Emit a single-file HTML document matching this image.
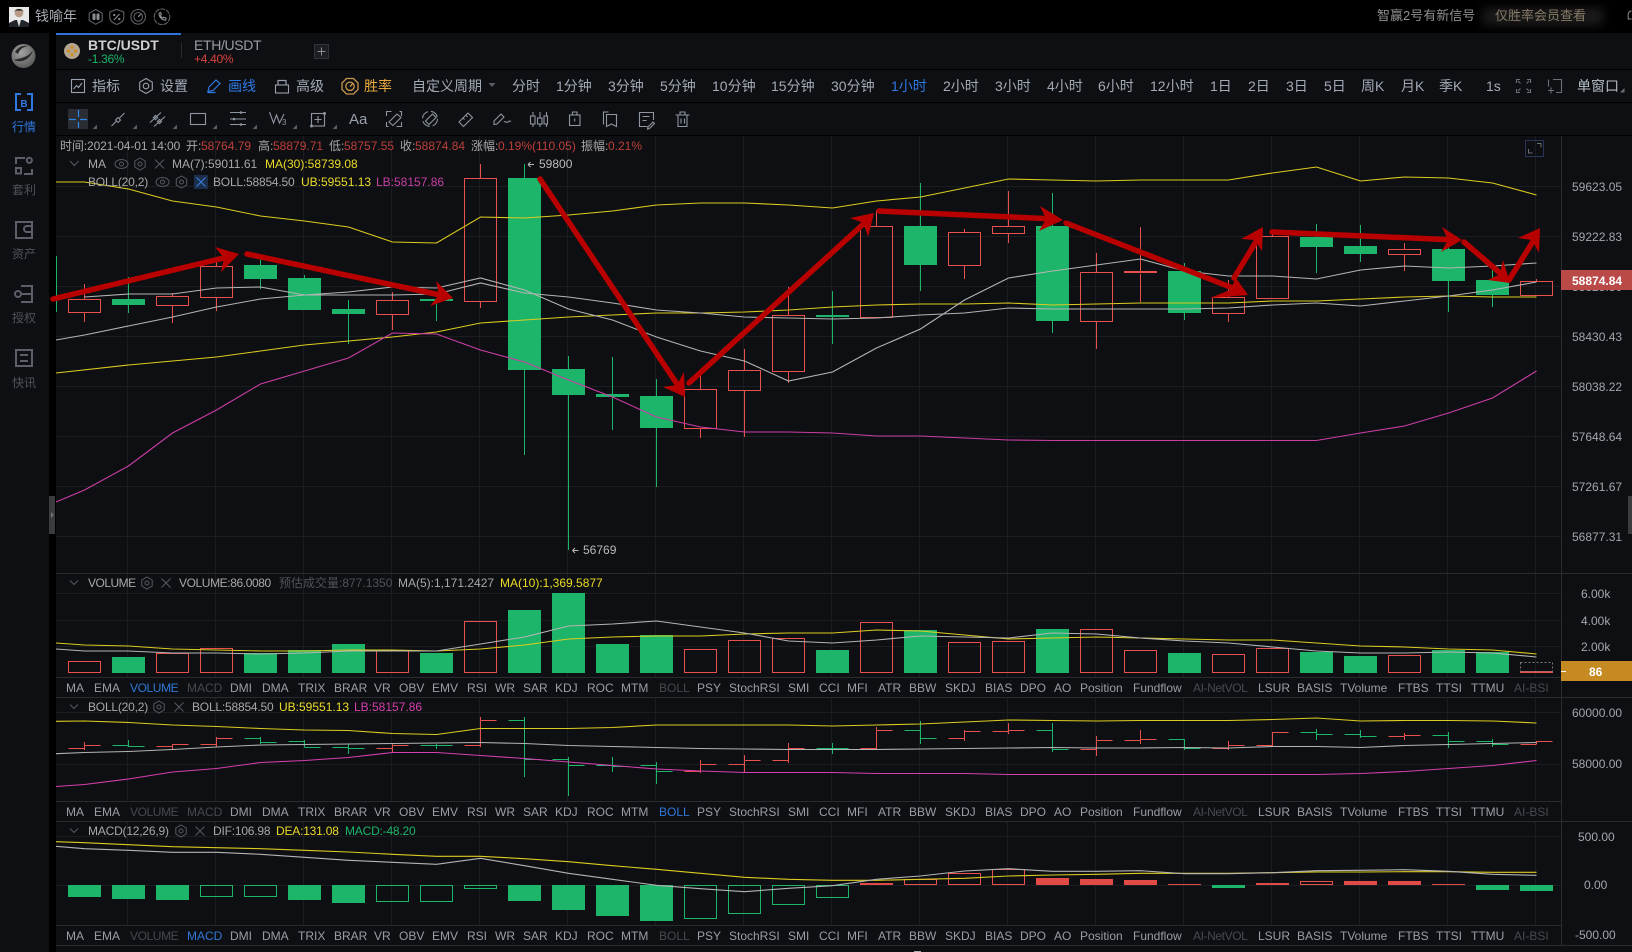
<!DOCTYPE html>
<html lang="zh"><head><meta charset="utf-8"><title>BTC/USDT</title>
<style>
html,body{margin:0;padding:0;background:#000}
#r{position:relative;width:1632px;height:952px;overflow:hidden;background:#000;font:12px/16px "Liberation Sans","Noto Sans CJK SC",sans-serif;color:#a8a8a8}
#r div.bg,#r svg.m{position:absolute}
.t,b{position:absolute;white-space:nowrap;font-weight:normal;height:16px;line-height:16px}
.n{font-size:14px;color:#a2aab6;top:78px}
.y{color:#ecdc28}.p{color:#c63fa6}.rd{color:#bd3f3b}
.ax{color:#a3a6ab;left:1572px}
.side{color:#4e525a;left:12px;width:24px;text-align:center}
.tb b{top:3px;color:#9a9ea5}
.tb b.d{color:#46494e}.tb b.a{color:#2f78d8}
.tb b.v{letter-spacing:-.4px}
.s2{letter-spacing:-.2px}
.tb{position:absolute;left:0;width:1561px;height:20px}
</style></head><body>
<div id="r">
<div class="bg" style="left:0;top:33px;width:49px;height:919px;background:#0d0f12"></div>
<div class="bg" style="left:56px;top:33px;width:1576px;height:919px;background:#0e0f12"></div>

<svg class="m" width="1632" height="952" viewBox="0 0 1632 952" style="left:0;top:0">
<defs>
<pattern id="v" x="127" y="0" width="88" height="10" patternUnits="userSpaceOnUse"><rect width="1" height="10" fill="#1b1d21"/></pattern>
<radialGradient id="lg" cx=".4" cy=".35" r=".8"><stop offset="0" stop-color="#a5a5a5"/><stop offset="1" stop-color="#4c4c4c"/></radialGradient>
<g id="hx" fill="none" stroke="#565a60"><path d="M0-6l5.2 3v6L0 6l-5.2-3v-6z"/><circle r="2"/></g>
<g id="xx" stroke="#565a60" fill="none"><path d="M-4.5-4.5l9 9M4.5-4.5l-9 9"/></g>
<g id="ey" fill="none" stroke="#565a60"><ellipse rx="6.5" ry="4.5"/><circle r="2"/></g>
<path id="tr" d="M4.5 0V4.5H0z" fill="#5a5d63"/>
</defs>

<!-- row separators -->
<rect x="56" y="69" width="1576" height="1" fill="#000"/><rect x="56" y="102" width="1576" height="1" fill="#000"/><rect x="56" y="135" width="1576" height="1" fill="#000"/>
<!-- grid -->
<rect x="127" y="136" width="1409" height="541" fill="url(#v)"/><rect x="127" y="697" width="1409" height="104" fill="url(#v)"/><rect x="127" y="821" width="1409" height="104" fill="url(#v)"/>
<path stroke="#1b1d21" d="M56 186.5H1561M56 236.5H1561M56 286.5H1561M56 336.5H1561M56 386.5H1561M56 436.5H1561M56 486.5H1561M56 536.5H1561M56 593.5H1561M56 620.5H1561M56 646.5H1561M56 712.5H1561M56 764.5H1561M56 836.5H1561M56 885.5H1561"/>
<path stroke="#2a2c30" d="M56 573.5H1632M56 677.5H1561M56 697.5H1632M56 801.5H1561M56 821.5H1632M56 925.5H1561M56 945.5H1632M1561.5 136V945"/>

<!-- main candles -->
<g shape-rendering="crispEdges">
<path fill="none" stroke="#1db56a" d="M56.5 256V312M128.5 277V313M260.5 258V289M304.5 275V310M348.5 300V344M436.5 298V321M524.5 164V455M568.5 356V550M612.5 357V430M656.5 379V487M832.5 291V344M920.5 183V291M1052.5 193V333M1184.5 263V320M1316.5 224V273M1360.5 225V262M1448.5 235V312M1492.5 270V307"/>
<path fill="#1db56a" d="M112 299h33v6h-33zM244 265h33v14h-33zM288 278h33v32h-33zM332 309h33v5h-33zM420 299h33v2h-33zM508 178h33v192h-33zM552 369h33v26h-33zM596 394h33v3h-33zM640 396h33v32h-33zM816 315h33v2h-33zM904 226h33v39h-33zM1036 226h33v95h-33zM1168 271h33v42h-33zM1300 237h33v10h-33zM1344 246h33v8h-33zM1432 249h33v32h-33zM1476 280h33v15h-33z"/>
<path fill="none" stroke="#e8504b" d="M68.5 299.5h32v13h-32zM84.5 284v15M84.5 313v9M156.5 296.5h32v9h-32zM172.5 293v3M172.5 306v17M200.5 266.5h32v31h-32zM216.5 262v4M216.5 298v13M376.5 300.5h32v14h-32zM392.5 292v8M392.5 315v15M464.5 178.5h32v123h-32zM480.5 164v14M480.5 302v6M684.5 389.5h32v39h-32zM700.5 375v14M700.5 429v9M728.5 370.5h32v20h-32zM744.5 349v21M744.5 391v46M772.5 315.5h32v56h-32zM788.5 287v28M788.5 372v11M860.5 226.5h32v91h-32zM876.5 210v16M948.5 232.5h32v33h-32zM964.5 229v3M964.5 266v13M992.5 226.5h32v7h-32zM1008.5 191v35M1008.5 234v9M1080.5 272.5h32v49h-32zM1096.5 253v19M1096.5 322v27M1124.5 271.5h32v1h-32zM1140.5 227v44M1140.5 274v28M1212.5 297.5h32v16h-32zM1228.5 280v17M1228.5 314v8M1256.5 236.5h32v62h-32zM1272.5 233v3M1388.5 249.5h32v5h-32zM1404.5 243v6M1404.5 255v16M1520.5 281.5h32v14h-32zM1536.5 279v2"/>
</g>
<!-- main lines -->
<g fill="none" stroke-width="1.1">
<polyline stroke="#dccc20" points="56,182 84.5,182 128.5,189 172.5,201 216.5,207 260.5,216 304.5,221 348.5,227 392.5,242 436.5,243 480.5,217 524.5,218 568.5,215 612.5,211 656.5,205 700.5,203 744.5,203 788.5,205 832.5,208 876.5,201 920.5,197 964.5,188 1008.5,179 1052.5,180 1096.5,181 1140.5,180 1184.5,180 1228.5,180 1272.5,173 1316.5,167 1360.5,181 1404.5,177 1448.5,178 1492.5,183 1536.5,195"/>
<polyline stroke="#dccc20" points="56,373 128.5,365 172.5,361 216.5,357 260.5,351 304.5,345 348.5,341 392.5,337 436.5,332 480.5,323 524.5,320 568.5,317 612.5,315 656.5,313 700.5,313 744.5,312 788.5,310 832.5,307 876.5,305 920.5,304 964.5,304 1008.5,303 1052.5,305 1096.5,304 1140.5,303 1184.5,303 1228.5,303 1272.5,301 1316.5,301 1360.5,299 1404.5,297 1448.5,296 1492.5,297 1536.5,297"/>
<polyline stroke="#b4b4b4" points="56,340 84.5,335 128.5,326 172.5,317 216.5,307 260.5,299 304.5,295 348.5,295 392.5,295 436.5,294 480.5,283 524.5,293 568.5,297 612.5,303 656.5,310 700.5,313 744.5,317 788.5,318 832.5,319 876.5,318 920.5,315 964.5,313 1008.5,308 1052.5,309 1096.5,309 1140.5,309 1184.5,309 1228.5,308 1272.5,305 1316.5,303 1360.5,306 1404.5,301 1448.5,296 1492.5,290 1536.5,282"/>
<polyline stroke="#b4b4b4" points="84.5,297 128.5,294 172.5,294 216.5,288 260.5,287 304.5,295 348.5,292 392.5,287 436.5,288 480.5,278 524.5,290 568.5,309 612.5,320 656.5,337 700.5,351 744.5,361 788.5,381 832.5,372 876.5,348 920.5,329 964.5,300 1008.5,278 1052.5,271 1096.5,265 1140.5,259 1184.5,271 1228.5,276 1272.5,276 1316.5,279 1360.5,270 1404.5,266 1448.5,268 1492.5,266 1536.5,263"/>
<polyline stroke="#c93ea6" points="56,502 84.5,490 128.5,466 172.5,433 216.5,410 260.5,384 304.5,371 348.5,358 392.5,333 436.5,334 480.5,350 524.5,362 568.5,380 612.5,397 656.5,417 700.5,427 744.5,432 788.5,432 832.5,433 876.5,436 920.5,436 964.5,438 1008.5,440 1052.5,440.5 1316.5,440.5 1360.5,433 1404.5,426 1448.5,413 1492.5,398 1536.5,371"/>
</g>
<!-- red arrows -->
<g stroke="#b90000" stroke-width="5.5" stroke-linecap="round" fill="none">
<path d="M53 299L232 256M247 254L445 296M540 179L681 390M689 383L870 218M879 211L1055 219M1066 223L1243 292M1234 278L1260 235M1272 232L1456 240M1464 242L1507 279M1509 280L1537 235"/>
</g>
<g fill="#b90000">
<polygon points="239,254 215,247 224,258 221,272"/><polygon points="453,298 436,281 439,295 430,306"/><polygon points="685,397 684,372 677,385 663,387"/><polygon points="874,213 850,218 863.5,223 868,237"/><polygon points="1063,220 1040,206 1046,219 1039,231"/><polygon points="1248,295 1236,278 1230,290 1210,298"/><polygon points="1263,227 1241,239 1255,240 1262,251"/><polygon points="1462,240 1442,227 1448,240 1441,252"/><polygon points="1510,283 1503,260 1500,274 1488,280"/><polygon points="1540,228 1518,238 1532,240 1539,253"/>
</g>
<!-- extreme label arrows -->
<path stroke="#b8b8b8" fill="none" d="M528 164.5h6M528 164.5l2.500-2.500M528 164.500l2.500 2.500M572.500 550.500h6M572.500 550.500l2.500-2.500M572.500 550.500l2.500 2.500"/>

<!-- volume -->
<g shape-rendering="crispEdges">
<path fill="#1db56a" d="M112 657h33V673h-33zM244 653h33V673h-33zM288 650h33V673h-33zM332 644h33V673h-33zM420 653h33V673h-33zM508 610h33V673h-33zM552 593h33V673h-33zM596 644h33V673h-33zM640 635h33V673h-33zM816 650h33V673h-33zM904 630h33V673h-33zM1036 629h33V673h-33zM1168 653h33V673h-33zM1300 652h33V673h-33zM1344 656h33V673h-33zM1432 650h33V673h-33zM1476 652h33V673h-33z"/>
<path fill="none" stroke="#e8504b" d="M68.500 661.500h32V672.500h-32zM156.500 653.500h32V672.500h-32zM200.500 648.500h32V672.500h-32zM376.500 650.500h32V672.500h-32zM464.500 621.500h32V672.500h-32zM684.500 649.500h32V672.500h-32zM728.500 640.500h32V672.500h-32zM772.500 638.500h32V672.500h-32zM860.500 622.500h32V672.500h-32zM948.500 642.500h32V672.500h-32zM992.500 641.500h32V672.500h-32zM1080.500 629.500h32V672.500h-32zM1124.500 650.500h32V672.500h-32zM1212.500 654.500h32V672.500h-32zM1256.500 648.500h32V672.500h-32zM1388.500 655.500h32V672.500h-32z"/>
<rect x="1520" y="671" width="33" height="2" fill="#e8504b"/>
<rect x="1520.500" y="662.500" width="32" height="9" fill="none" stroke="#777" stroke-dasharray="2 2"/>
</g>
<g fill="none" stroke-width="1.1">
<polyline stroke="#dccc20" points="56,643 84.5,645 128.5,646 172.5,649 216.5,650 260.5,651 304.5,651 348.5,650 392.5,650 436.5,651 480.5,649 524.5,645 568.5,639 612.5,637 656.5,636 700.5,636 744.5,634 788.5,633 832.5,633 876.5,630 920.5,631 964.5,635 1008.5,639 1052.5,638 1096.5,637 1140.5,638 1184.5,639 1228.5,640 1272.5,640 1316.5,643 1360.5,646 1404.5,647 1448.5,649 1492.5,650 1536.5,654"/>
<polyline stroke="#b4b4b4" points="56,649 84.5,651 128.5,651 172.5,653 216.5,653 260.5,654 304.5,653 348.5,651 392.5,651 436.5,651 480.5,644 524.5,637 568.5,626 612.5,624 656.5,621 700.5,627 744.5,633 788.5,641 832.5,643 876.5,640 920.5,636 964.5,637 1008.5,638 1052.5,633 1096.5,634 1140.5,638 1184.5,641 1228.5,643 1272.5,647 1316.5,651 1360.5,653 1404.5,653 1448.5,652 1492.5,653 1536.5,657"/>
</g>

<!-- BOLL sub panel -->
<g shape-rendering="crispEdges" fill="none">
<path stroke="#e8504b" d="M68.5 748.5h16M84.5 745.5h16M84.5 742V750M156.5 746.5h16M172.5 744.5h16M172.5 744V749M200.5 744.5h16M216.5 738.5h16M216.5 737V747M376.5 748.5h16M392.5 745.5h16M392.5 743V752M464.5 745.5h16M480.5 720.5h16M480.5 717V747M684.5 771.5h16M700.5 764.5h16M700.5 760V773M728.5 764.5h16M744.5 760.5h16M744.5 755V772M772.5 760.5h16M788.5 748.5h16M788.5 743V763M860.5 748.5h16M876.5 730.5h16M876.5 727V749M948.5 738.5h16M964.5 731.5h16M964.5 730V741M992.5 731.5h16M1008.5 730.5h16M1008.5 723V734M1080.5 749.5h16M1096.5 740.5h16M1096.5 736V756M1124.5 740.5h16M1140.5 739.5h16M1140.5 730V744M1212.5 748.5h16M1228.5 745.5h16M1228.5 741V750M1256.5 745.5h16M1272.5 732.5h16M1272.5 732V746M1388.5 736.5h16M1404.5 735.5h16M1404.5 733V740M1520.5 744.5h16M1536.5 741.5h16M1536.5 741V744"/>
<path stroke="#1db56a" d="M112.5 745.5h16M128.5 746.5h16M128.5 740V747M244.5 738.5h16M260.5 742.5h16M260.5 737V744M288.5 741.5h16M304.5 747.5h16M304.5 740V747M332.5 747.5h16M348.5 748.5h16M348.5 744V754M420.5 745.5h16M436.5 745.5h16M436.5 744V749M508.5 720.5h16M524.5 759.5h16M524.5 717V777M552.5 759.5h16M568.5 765.5h16M568.5 757V796M596.5 765.5h16M612.5 766.5h16M612.5 757V772M640.5 765.5h16M656.5 771.5h16M656.5 762V784M816.5 748.5h16M832.5 748.5h16M832.5 743V754M904.5 730.5h16M920.5 738.5h16M920.5 721V744M1036.5 730.5h16M1052.5 749.5h16M1052.5 723V752M1168.5 739.5h16M1184.5 748.5h16M1184.5 739V750M1300.5 732.5h16M1316.5 734.5h16M1316.5 729V740M1344.5 734.5h16M1360.5 736.5h16M1360.5 730V738M1432.5 735.5h16M1448.5 741.5h16M1448.5 732V748M1476.5 741.5h16M1492.5 744.5h16M1492.5 739V747"/>
</g>
<g fill="none" stroke-width="1.1">
<polyline stroke="#dccc20" points="56,721.3 84.5,721 128.5,722.5 172.5,725 216.5,726.5 260.5,728.5 304.5,730 348.5,730.5 392.5,733.5 436.5,734.5 480.5,728.5 524.5,728.5 568.5,728.5 612.5,727.5 656.5,725 700.5,725 744.5,725 788.5,725 832.5,726 876.5,725 920.5,724 964.5,722 1008.5,720 1052.5,720.5 1096.5,721 1140.5,720.5 1184.5,720.5 1228.5,720.5 1272.5,719.5 1316.5,718 1360.5,721 1404.5,720.5 1448.5,720.5 1492.5,721 1536.5,723"/>
<polyline stroke="#b4b4b4" points="56,753.7 84.5,752.5 128.5,751.5 172.5,749.5 216.5,747 260.5,745 304.5,744.5 348.5,744 392.5,743.5 436.5,743 480.5,742.5 524.5,743.5 568.5,745.5 612.5,746.5 656.5,747.5 700.5,748.5 744.5,749 788.5,749.5 832.5,749.5 876.5,749.5 920.5,749 964.5,748.5 1008.5,748 1052.5,747.5 1096.5,748 1140.5,748 1184.5,747.5 1228.5,748 1272.5,746.5 1316.5,746.5 1360.5,747.5 1404.5,745.5 1448.5,744.5 1492.5,743.5 1536.5,742.5"/>
<polyline stroke="#d63fb0" points="56,786.5 84.5,784.5 128.5,779 172.5,772 216.5,768.5 260.5,762.5 304.5,760.5 348.5,757.5 392.5,752.5 436.5,752.5 480.5,755.5 524.5,758.5 568.5,762 612.5,765.5 656.5,769 700.5,771 744.5,772.5 788.5,772.5 832.5,772.5 876.5,773.5 920.5,773.5 964.5,773.5 1008.5,774.5 1316.5,774.5 1360.5,773.5 1404.5,771.5 1448.5,768.5 1492.5,765.5 1536.5,760.5"/>
</g>

<!-- MACD -->
<g shape-rendering="crispEdges">
<path fill="#1db56a" d="M68 885h33V897h-33zM112 885h33V899h-33zM156 885h33V900h-33zM288 885h33V900h-33zM332 885h33V903h-33zM508 885h33V901h-33zM552 885h33V910h-33zM596 885h33V916h-33zM640 885h33V921h-33zM1212 885h33V888h-33zM1476 885h33V890h-33zM1520 885h33V891h-33z"/>
<path fill="none" stroke="#1db56a" d="M200.500 885.500h32V896.500h-32zM244.500 885.500h32V896.500h-32zM376.500 885.500h32V901.500h-32zM420.500 885.500h32V901.500h-32zM464.500 885.500h32V888.500h-32zM684.500 885.500h32V918.500h-32zM728.500 885.500h32V913.500h-32zM772.500 885.500h32V904.500h-32zM816.500 885.500h32V897.500h-32z"/>
<path fill="#e24a45" d="M860 883h33V885h-33zM1036 878h33V885h-33zM1080 879h33V885h-33zM1124 880h33V885h-33zM1168 884h33V885h-33zM1256 883h33V885h-33zM1344 881h33V885h-33zM1388 881h33V885h-33zM1432 884h33V885h-33z"/>
<path fill="none" stroke="#e8504b" d="M904.500 879.500h32V884.500h-32zM948.500 873.500h32V884.500h-32zM992.500 869.500h32V884.500h-32zM1300.500 881.500h32V884.500h-32z"/>
</g>
<g fill="none" stroke-width="1.1">
<polyline stroke="#dccc20" points="56,841.7 84.5,842.7 128.5,844.7 172.5,846.7 216.5,847.7 260.5,848.7 304.5,850.3 348.5,852 392.5,854.3 436.5,856.3 480.5,856.3 524.5,858.7 568.5,861.7 612.5,865.7 656.5,869.3 700.5,873.3 744.5,877.3 788.5,879.3 832.5,880.3 876.5,880.3 920.5,879.3 964.5,878.3 1008.5,876 1052.5,875 1096.5,874.3 1140.5,873.3 1184.5,873.3 1228.5,873.3 1272.5,872.7 1316.5,872 1360.5,872 1404.5,871.7 1448.5,871.7 1492.5,872.3 1536.5,872.3"/>
<polyline stroke="#b4b4b4" points="56,846.3 84.5,848.7 128.5,850.3 172.5,852.3 216.5,852.3 260.5,854.3 304.5,857.3 348.5,860.3 392.5,862.3 436.5,864.3 480.5,858.3 524.5,865.7 568.5,873.3 612.5,879.3 656.5,885.3 700.5,888.7 744.5,891.7 788.5,888.3 832.5,885.7 876.5,879.3 920.5,876 964.5,871 1008.5,868.7 1052.5,871.3 1096.5,871.3 1140.5,870.7 1184.5,873.7 1228.5,873.7 1272.5,872.7 1316.5,870.7 1360.5,870.3 1404.5,869.700 1448.5,871.3 1492.5,874.3 1536.5,875.3"/>
</g>

<!-- price boxes -->
<rect x="1561" y="270" width="71" height="20" fill="#b94a47"/>
<rect x="1561" y="280" width="5" height="1" fill="#fff"/>
<rect x="1561" y="661" width="71" height="20" fill="#c68a22"/>
<rect x="1561" y="671" width="5" height="1" fill="#fff"/>
<rect x="914" y="951" width="7" height="1" fill="#aaa"/>

<!-- collapse handles -->
<rect x="49" y="496" width="6" height="38" fill="#3a3c40"/><path d="M51 512l2.500 3-2.500 3z" fill="#777"/>
<rect x="1628" y="496" width="4" height="38" fill="#3a3c40"/>

<!-- top bar icons -->
<rect x="9" y="7" width="20" height="20" fill="#e8e8e8"/>
<path d="M9 27v-4l6-3h8l6 3v4z" fill="#22262c"/><path d="M17 20l2 7 2-7z" fill="#ddd"/><circle cx="19" cy="13" r="4.300" fill="#b89a86"/><path d="M14.500 12c0-4 9-4 9 0l-1-1.500h-7z" fill="#1a1a1a"/>
<g fill="none" stroke="#5e6166" stroke-width="1.100">
<path d="M95.700 9.500l6.500 3.700v7.400l-6.500 3.700-6.500-3.700v-7.400z"/>
<path d="M116.800 9.500l7 2.500v6c0 3-3 5-7 6.500-4-1.500-7-3.500-7-6.500v-6z"/>
<circle cx="138.200" cy="16.800" r="7.300"/><circle cx="138.200" cy="16.800" r="4.300"/>
<circle cx="162" cy="16.800" r="7.800" stroke-dasharray="5 .8"/>
<path d="M159 13.500c0 3.500 3 6.700 6.700 6.700l.4-2-2.100-1-1 .9c-1-.4-2.100-1.500-2.600-2.700l1-1-.9-2z" stroke="#8a8d92"/>
<path d="M119.500 14l-5.500 6" stroke="#8a8d92"/><path d="M138.200 16.800l2.500-2.500" stroke="#8a8d92"/>
</g>
<rect x="92.500" y="13.500" width="3" height="6.500" rx="1" fill="#8a8d92"/><rect x="96.500" y="13.500" width="3" height="6.500" rx="1" fill="#8a8d92"/>
<circle cx="114.300" cy="15" r="1.100" fill="#8a8d92"/><circle cx="119.300" cy="19" r="1.100" fill="#8a8d92"/>
<path d="M1631.500 11c-2.500 0-3.300 2-3.300 4v4h3.300" fill="none" stroke="#777" stroke-width="1.200"/>

<!-- tab strip -->
<rect x="56" y="33" width="125" height="2" fill="#2d73d9"/>
<rect x="181" y="43" width="1" height="15" fill="#2a2c30"/>
<circle cx="72" cy="51" r="8" fill="#b3a58f"/>
<g fill="#d48a1f"><path d="M72 45.500l2 2-2 2-2-2z"/><path d="M72 52.500l2 2-2 2-2-2z"/><path d="M68.500 49l2 2-2 2-2-2z"/><path d="M75.500 49l2 2-2 2-2-2z"/></g>
<rect x="314.500" y="44.500" width="14" height="14" fill="#1c1e22" stroke="#303338"/>
<path d="M317.500 51.500h8M321.500 47.500v8" stroke="#8a8d92"/>

<!-- side icons -->
<circle cx="23.500" cy="56" r="12" fill="url(#lg)"/>
<path d="M14 60c6-2 14-2 19-10-2 8-10 14-19 10zM15 52c3-5 8-7 13-6-5 1-8 3-10 8z" fill="#2a2a2a"/>
<g fill="none" stroke="#2f78e0" stroke-width="2">
<path d="M21 94H16V110H21M27 94H32V110H27"/>
</g>
<g fill="none" stroke="#5b5f6a" stroke-width="2">
<path d="M25 158H16V164M32 169V174H24"/><circle cx="29.300" cy="160.300" r="2.600"/><rect x="16" y="168" width="5" height="5.500"/>
<rect x="16" y="222" width="16" height="16"/><path d="M32 226H27a3 3 0 0 0 0 6h5"/>
<path d="M21 286H32V302H21M22 294H32" /><circle cx="18" cy="294" r="3"/>
<rect x="16" y="350" width="16" height="16"/><path d="M20 355H28M20 361H28"/>
</g>

<!-- toolbar 1 icons -->
<g fill="none" stroke="#98a1ad" stroke-width="1.100">
<rect x="71.500" y="79.500" width="13" height="13"/><path d="M73.500 89l3-3.500 2 2 3.500-4.500"/>
<path d="M146 78.500l6.300 3.700v7.600L146 93.500l-6.300-3.700v-7.600z"/><circle cx="146" cy="86" r="2.800"/>
<rect x="275.500" y="85" width="13" height="8"/><path d="M278 85v-4.500h8V85" stroke-width="1.200"/>
<path d="M1516.500 83v-3.500h3.500M1527 79.500h3.500V83M1516.500 89v3.500h3.500M1527 92.500h3.500V89M1518 81l2.500 2.500M1529 81l-2.500 2.500M1518 91l2.500-2.500M1529 91l-2.500-2.500" stroke="#6a7078"/>
<path d="M1553 79.500h8.500v13H1556M1548.500 79.500v7" stroke="#6a7078"/><path d="M1548 90.500h6M1551 87.500v6" stroke="#6a7078"/>
</g>
<path d="M207.500 92.500h8M209 87l7-7 4 3.500-7 7-5 1z" fill="none" stroke="#2f78e0" stroke-width="1.200"/>
<g fill="none" stroke="#c7994a" stroke-width="1.300">
<path d="M346.500 78.500h7l4.500 4.500v6.500L353.500 94h-7L342 89.500V83z"/><circle cx="350" cy="86.300" r="4.200"/><path d="M350 86.500l2.800-3"/>
</g>
<path d="M488.500 83h7l-3.500 4z" fill="#5a5d63"/>
<path d="M1620 92.500h4.500V88z" fill="#6a6d72"/>

<!-- toolbar 2 icons -->
<rect x="68" y="109" width="20" height="20" fill="#2a2d33"/>
<path d="M69 119.500h7M80 119.500h7M78.500 110v7M78.500 122v6" stroke="#2f86e8" stroke-width="1.200"/>
<g fill="none" stroke="#8d95a0" stroke-width="1.100">
<path d="M111.500 126l5-5M119.500 118l5-5"/><path d="M118 117.500l2.500 2.500-2.500 2.500-2.500-2.500z"/>
<path d="M150 122.500l11-10M154 126.500l11-10"/><rect x="154" y="116" width="3" height="3" transform="rotate(45 155.500 117.500)"/><rect x="158" y="120" width="3" height="3" transform="rotate(45 159.500 121.500)"/>
<rect x="190.500" y="113.500" width="15" height="11"/>
<path d="M230 112.500h16M230 119h16M230 124.500h16"/>
<path d="M269.500 112l4 11 3-8 3 8 4.500-9"/>
<rect x="311.500" y="113.500" width="13" height="12.500"/><path d="M314.500 119.500h7M318 116v7"/>
<path d="M386.500 116v-4.500h5M396.500 126.500h5V122M386.500 122v4.500h2M401.500 116v-4.500h-2"/><path d="M389 122l8-8 4 3.500-8 8z"/>
<circle cx="430" cy="118.800" r="7.500" stroke-dasharray="9 3"/><path d="M425.500 121l7-7 3.500 3.500-7 7z"/>
<path d="M459 122l9-9 4.500 4.500-9 9z"/><path d="M463 118l1.500 1.500M466 115.500l1.500 1.500"/>
<path d="M494 121l7-7 3 3-7 7-3 .5zM504 122c1.500-1.500 2.500 1.500 4 0s2-1 3-.5"/>
<path d="M533 112v15M540 112v15M546.500 112v15"/><rect x="530.500" y="116" width="4.500" height="8" fill="#0e0f12"/><rect x="537.500" y="118" width="4.500" height="6" fill="#0e0f12"/><rect x="544" y="116" width="3.500" height="8" fill="#0e0f12"/>
<rect x="569.500" y="115" width="10.500" height="10.500"/><path d="M572.500 115v-3h4.500v3M574.700 118.500v3"/>
<path d="M603.500 124.500V112h5M606.500 114.500h10v12l-5-2.500-5 2.500z"/>
<path d="M653.500 120v-7.500h-14v14h8M642.500 116.500h7M642.500 120.500h4M648 127l5-5 1.500 1.500-5 5-2 .5z"/>
<path d="M675.500 115h14M678 115v11.500h9V115M680 115v-3h5v3M681 118.500v5M684.500 118.500v5"/>
</g>
<circle cx="241" cy="112.500" r="1.300" fill="#8d95a0"/><circle cx="234" cy="119" r="1.300" fill="#8d95a0"/><circle cx="241" cy="124.500" r="1.300" fill="#8d95a0"/>
<use href="#tr" x="92.500" y="124.500"/><use href="#tr" x="132.500" y="124.500"/><use href="#tr" x="172.500" y="124.500"/><use href="#tr" x="212.500" y="124.500"/><use href="#tr" x="252.500" y="124.500"/><use href="#tr" x="292.500" y="124.500"/><use href="#tr" x="332.500" y="124.500"/>
<circle cx="311.500" cy="126" r="1.500" fill="#8d95a0"/><circle cx="324.500" cy="113.500" r="1.500" fill="#8d95a0"/>

<!-- legend icons -->
<path d="M70 161l4.300 4.500 4.300-4.500M70 580.500l4 4 4-4M70 704.500l4 4 4-4M70 828.500l4 4 4-4" fill="none" stroke="#56595e"/>
<use href="#ey" x="121.500" y="164"/><use href="#hx" x="140" y="164"/><use href="#xx" x="159.500" y="164"/>
<use href="#ey" x="162.500" y="182"/><use href="#hx" x="181.500" y="182"/>
<rect x="194" y="175" width="14" height="14" fill="#1c2e4c"/><path d="M196.500 177.500l9 9M205.500 177.500l-9 9" stroke="#3a82e0"/>
<use href="#hx" x="147" y="583"/><use href="#xx" x="166" y="583"/>
<use href="#hx" x="159" y="707"/><use href="#xx" x="179" y="707"/>
<use href="#hx" x="181" y="831"/><use href="#xx" x="200" y="831"/>
<rect x="1525.500" y="140.500" width="18" height="16" fill="none" stroke="#2a3358"/>
<path d="M1537 143.500h4v4M1528.500 149v4h4" fill="none" stroke="#6a6e76"/>
</svg>

<!-- TOP BAR TEXT -->
<div class="bg" style="left:1483px;top:8px;width:120px;height:17px;background:#1c1b1a;filter:blur(5px)"></div>
<span class="t" style="left:35px;top:8px;font-size:14px;color:#a6abb3">钱喻年</span>
<span class="t" style="left:1377px;top:8px;font-size:13px;color:#8f8f8f">智赢2号有新信号</span>
<span class="t" style="left:1495px;top:8px;font-size:13px;color:#857a68">仅胜率会员查看</span>

<!-- TABS -->
<span class="t" style="left:88px;top:37px;font-size:14px;font-weight:bold;color:#cfcfcf">BTC/USDT</span>
<span class="t" style="left:88px;top:51px;font-size:12px;letter-spacing:-.3px;color:#1db56a">-1.36%</span>
<span class="t" style="left:194px;top:37px;font-size:14px;letter-spacing:-.35px;color:#989da3">ETH/USDT</span>
<span class="t" style="left:194px;top:51px;font-size:12px;letter-spacing:-.3px;color:#d9423e">+4.40%</span>

<!-- SIDEBAR TEXT -->
<span class="t" style="left:12px;top:119px;width:24px;text-align:center;color:#2f78e0">行情</span>
<span class="t side" style="top:182px">套利</span>
<span class="t side" style="top:246px">资产</span>
<span class="t side" style="top:310px">授权</span>
<span class="t side" style="top:375px">快讯</span>
<span class="t" style="left:18px;top:97px;width:12px;text-align:center;font-size:10px;font-weight:bold;color:#2f78e0">B</span>

<!-- TOOLBAR 1 -->
<span class="t n" style="left:92px">指标</span><span class="t n" style="left:160px">设置</span>
<span class="t n" style="left:228px;color:#2f7be6">画线</span><span class="t n" style="left:296px">高级</span>
<span class="t n" style="left:364px;color:#e8a83a">胜率</span><span class="t n" style="left:412px">自定义周期</span>
<span class="t n" style="left:512px">分时</span><span class="t n" style="left:556px">1分钟</span><span class="t n" style="left:608px">3分钟</span><span class="t n" style="left:660px">5分钟</span><span class="t n" style="left:712px">10分钟</span><span class="t n" style="left:771px">15分钟</span><span class="t n" style="left:831px">30分钟</span>
<span class="t n" style="left:891px;color:#2f78e0">1小时</span><span class="t n" style="left:943px">2小时</span><span class="t n" style="left:995px">3小时</span><span class="t n" style="left:1047px">4小时</span><span class="t n" style="left:1098px">6小时</span><span class="t n" style="left:1150px">12小时</span>
<span class="t n" style="left:1210px">1日</span><span class="t n" style="left:1248px">2日</span><span class="t n" style="left:1286px">3日</span><span class="t n" style="left:1324px">5日</span><span class="t n" style="left:1361px">周K</span><span class="t n" style="left:1401px">月K</span><span class="t n" style="left:1439px">季K</span><span class="t n" style="left:1486px">1s</span>
<span class="t n" style="left:1577px;color:#b4bcc6">单窗口</span>
<span class="t" style="left:349px;top:112px;font-size:15px;color:#98a1ad">Aa</span>
<span class="t" style="left:282px;top:115px;font-size:8px;color:#8d95a0">3</span>

<!-- CHART LEGEND -->
<span class="t" style="left:60px;top:138px;letter-spacing:-.1px">时间:2021-04-01 14:00</span>
<span class="t" style="left:186px;top:138px">开:</span><span class="t rd" style="left:201px;top:138px">58764.79</span>
<span class="t" style="left:258px;top:138px">高:</span><span class="t rd" style="left:273px;top:138px">58879.71</span>
<span class="t" style="left:329px;top:138px">低:</span><span class="t rd" style="left:344px;top:138px">58757.55</span>
<span class="t" style="left:400px;top:138px">收:</span><span class="t rd" style="left:415px;top:138px">58874.84</span>
<span class="t" style="left:471px;top:138px">涨幅:</span><span class="t rd" style="left:498px;top:138px">0.19%(110.05)</span>
<span class="t" style="left:581px;top:138px">振幅:</span><span class="t rd" style="left:608px;top:138px">0.21%</span>
<span class="t" style="left:88px;top:156px">MA</span><span class="t" style="left:172px;top:156px">MA(7):59011.61</span><span class="t y" style="left:265px;top:156px">MA(30):58739.08</span>
<span class="t s2" style="left:88px;top:174px">BOLL(20,2)</span><span class="t s2" style="left:213px;top:174px">BOLL:58854.50</span><span class="t y" style="left:301px;top:174px">UB:59551.13</span><span class="t p" style="left:376px;top:174px">LB:58157.86</span>
<span class="t" style="left:539px;top:156px;color:#bbb">59800</span>
<span class="t" style="left:583px;top:542px;color:#bbb">56769</span>

<!-- AXES -->
<span class="t ax" style="top:179px">59623.05</span><span class="t ax" style="top:229px">59222.83</span><span class="t ax" style="top:279px">58825.30</span><span class="t ax" style="top:329px">58430.43</span><span class="t ax" style="top:379px">58038.22</span><span class="t ax" style="top:429px">57648.64</span><span class="t ax" style="top:479px">57261.67</span><span class="t ax" style="top:529px">56877.31</span>
<div class="bg" style="left:1561px;top:270px;width:71px;height:20px;background:#b94a47"></div>
<span class="t" style="left:1572px;top:273px;color:#fff;font-weight:bold;font-size:12px">58874.84</span>
<span class="t ax" style="left:1581px;top:586px">6.00k</span><span class="t ax" style="left:1581px;top:613px">4.00k</span><span class="t ax" style="left:1581px;top:639px">2.00k</span>
<span class="t" style="left:1589px;top:664px;color:#fff;font-weight:bold">86</span>
<span class="t ax" style="top:705px">60000.00</span><span class="t ax" style="top:756px">58000.00</span>
<span class="t ax" style="left:1578px;top:829px">500.00</span><span class="t ax" style="left:1584px;top:877px">0.00</span><span class="t ax" style="left:1575px;top:927px">-500.00</span>

<!-- VOLUME legend -->
<span class="t" style="left:88px;top:575px;letter-spacing:-.5px">VOLUME</span><span class="t" style="left:179px;top:575px;letter-spacing:-.4px">VOLUME:86.0080</span><span class="t" style="left:279px;top:575px;color:#4f5257">预估成交量:877.1350</span><span class="t" style="left:398px;top:575px">MA(5):1,171.2427</span><span class="t y" style="left:500px;top:575px">MA(10):1,369.5877</span>
<!-- BOLL legend -->
<span class="t s2" style="left:88px;top:699px">BOLL(20,2)</span><span class="t s2" style="left:192px;top:699px">BOLL:58854.50</span><span class="t y" style="left:279px;top:699px">UB:59551.13</span><span class="t" style="left:354px;top:699px;color:#d63fb0">LB:58157.86</span>
<!-- MACD legend -->
<span class="t s2" style="left:88px;top:823px">MACD(12,26,9)</span><span class="t s2" style="left:213px;top:823px">DIF:106.98</span><span class="t y s2" style="left:276px;top:823px">DEA:131.08</span><span class="t s2" style="left:345px;top:823px;color:#1db56a">MACD:-48.20</span>

<!-- INDICATOR TABS -->
<div class="tb" style="top:677px"><b style="left:66px">MA</b><b style="left:94px">EMA</b><b class="a v" style="left:130px">VOLUME</b><b class="d" style="left:187px">MACD</b><b style="left:230px">DMI</b><b style="left:262px">DMA</b><b style="left:298px">TRIX</b><b style="left:334px">BRAR</b><b style="left:374px">VR</b><b style="left:399px">OBV</b><b style="left:432px">EMV</b><b style="left:467px">RSI</b><b style="left:495px">WR</b><b style="left:523px">SAR</b><b style="left:555px">KDJ</b><b style="left:587px">ROC</b><b style="left:621px">MTM</b><b class="d" style="left:659px">BOLL</b><b style="left:697px">PSY</b><b style="left:729px">StochRSI</b><b style="left:788px">SMI</b><b style="left:819px">CCI</b><b style="left:847px">MFI</b><b style="left:878px">ATR</b><b style="left:909px">BBW</b><b style="left:945px">SKDJ</b><b style="left:985px">BIAS</b><b style="left:1020px">DPO</b><b style="left:1054px">AO</b><b style="left:1080px">Position</b><b style="left:1133px">Fundflow</b><b class="d v" style="left:1193px">AI-NetVOL</b><b style="left:1258px">LSUR</b><b style="left:1297px">BASIS</b><b style="left:1340px">TVolume</b><b style="left:1398px">FTBS</b><b style="left:1436px">TTSI</b><b style="left:1471px">TTMU</b><b class="d" style="left:1514px">AI-BSI</b></div>
<div class="tb" style="top:801px"><b style="left:66px">MA</b><b style="left:94px">EMA</b><b class="d v" style="left:130px">VOLUME</b><b class="d" style="left:187px">MACD</b><b style="left:230px">DMI</b><b style="left:262px">DMA</b><b style="left:298px">TRIX</b><b style="left:334px">BRAR</b><b style="left:374px">VR</b><b style="left:399px">OBV</b><b style="left:432px">EMV</b><b style="left:467px">RSI</b><b style="left:495px">WR</b><b style="left:523px">SAR</b><b style="left:555px">KDJ</b><b style="left:587px">ROC</b><b style="left:621px">MTM</b><b class="a" style="left:659px">BOLL</b><b style="left:697px">PSY</b><b style="left:729px">StochRSI</b><b style="left:788px">SMI</b><b style="left:819px">CCI</b><b style="left:847px">MFI</b><b style="left:878px">ATR</b><b style="left:909px">BBW</b><b style="left:945px">SKDJ</b><b style="left:985px">BIAS</b><b style="left:1020px">DPO</b><b style="left:1054px">AO</b><b style="left:1080px">Position</b><b style="left:1133px">Fundflow</b><b class="d v" style="left:1193px">AI-NetVOL</b><b style="left:1258px">LSUR</b><b style="left:1297px">BASIS</b><b style="left:1340px">TVolume</b><b style="left:1398px">FTBS</b><b style="left:1436px">TTSI</b><b style="left:1471px">TTMU</b><b class="d" style="left:1514px">AI-BSI</b></div>
<div class="tb" style="top:925px"><b style="left:66px">MA</b><b style="left:94px">EMA</b><b class="d v" style="left:130px">VOLUME</b><b class="a" style="left:187px">MACD</b><b style="left:230px">DMI</b><b style="left:262px">DMA</b><b style="left:298px">TRIX</b><b style="left:334px">BRAR</b><b style="left:374px">VR</b><b style="left:399px">OBV</b><b style="left:432px">EMV</b><b style="left:467px">RSI</b><b style="left:495px">WR</b><b style="left:523px">SAR</b><b style="left:555px">KDJ</b><b style="left:587px">ROC</b><b style="left:621px">MTM</b><b class="d" style="left:659px">BOLL</b><b style="left:697px">PSY</b><b style="left:729px">StochRSI</b><b style="left:788px">SMI</b><b style="left:819px">CCI</b><b style="left:847px">MFI</b><b style="left:878px">ATR</b><b style="left:909px">BBW</b><b style="left:945px">SKDJ</b><b style="left:985px">BIAS</b><b style="left:1020px">DPO</b><b style="left:1054px">AO</b><b style="left:1080px">Position</b><b style="left:1133px">Fundflow</b><b class="d v" style="left:1193px">AI-NetVOL</b><b style="left:1258px">LSUR</b><b style="left:1297px">BASIS</b><b style="left:1340px">TVolume</b><b style="left:1398px">FTBS</b><b style="left:1436px">TTSI</b><b style="left:1471px">TTMU</b><b class="d" style="left:1514px">AI-BSI</b></div>
</div>
</body></html>
